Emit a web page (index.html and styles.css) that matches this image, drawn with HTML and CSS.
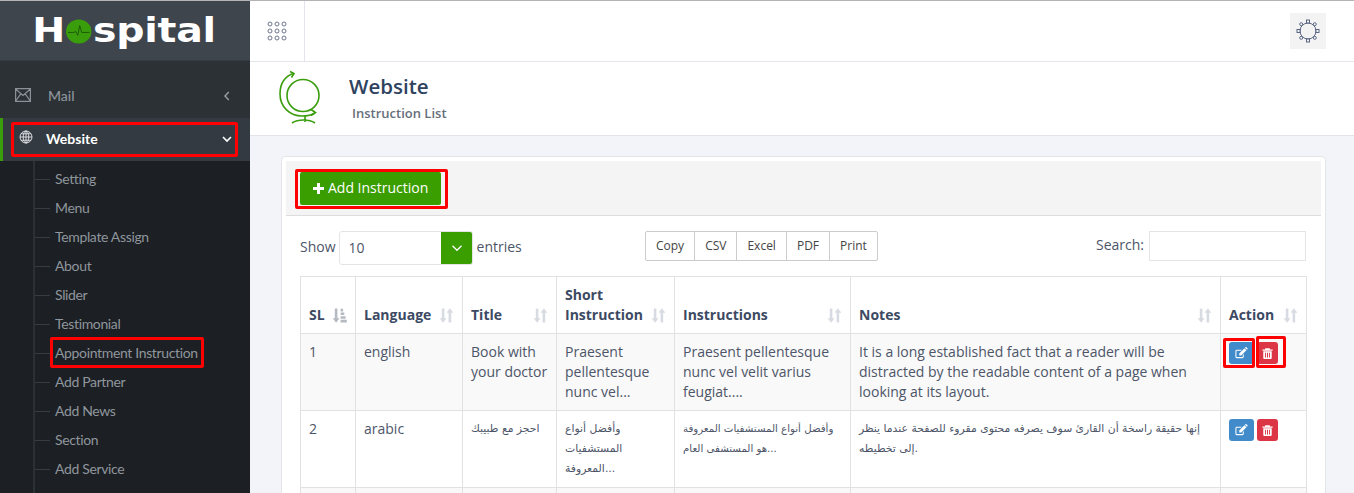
FILE: index.html
```html
<!DOCTYPE html>
<html lang="en">
<head>
  <meta charset="UTF-8">
  <meta name="viewport" content="width=device-width, initial-scale=1.0">
  <title>Instruction List</title>
  <link rel="stylesheet" href="styles.css">
</head>
<body>
  <svg class="defs" width="0" height="0">
    <symbol id="sort" viewBox="0 0 15 15">
      <path d="M2.800 .5h2.600v9.800h2.100L4.100 14.800 .7 10.300h2.100z" />
      <path d="M9.600 14.500h2.600V4.700h2.100L10.900 .2 7.500 4.700h2.100z" />
    </symbol>
    <symbol id="sort-on" viewBox="0 0 15 15">
      <path d="M2.800 .5h2.600v9.800h2.100L4.100 14.800 .7 10.300h2.100z" />
      <path d="M8.600 .8h2.500v2.600H8.600zM8.600 4.500h3.700v2.600H8.600zM8.600 8.200h5v2.500h-5zM8.600 11.800h6.200v2.600H8.600z" />
    </symbol>
    <symbol id="edit" viewBox="0 0 16 16">
      <path d="M11.200 9.200v3.100c0 .9-.7 1.600-1.600 1.600H3.200c-.9 0-1.600-.7-1.600-1.600V5.900c0-.9.7-1.600 1.600-1.600h5.700l-1.200 1.200H3.200c-.2 0-.4.2-.4.4v6.400c0 .2.2.4.4.4h6.400c.2 0 .4-.2.4-.4v-1.900z" />
      <path d="M6 8.500l5.900-5.900 2.300 2.300-5.900 5.900H6zM12.500 2l.6-.6c.3-.3.8-.3 1.100 0l1.200 1.200c.3.300.3.800 0 1.100l-.6.6z" />
    </symbol>
    <symbol id="trash" viewBox="0 0 16 16">
      <path d="M5.500 1.500h5l.8 1.500h3v1.500H1.700V3h3zM2.800 5.300h10.400v8c0 .9-.6 1.500-1.400 1.500H4.200c-.8 0-1.400-.6-1.400-1.500zM5 7v6h1.100V7zm2.400 0v6h1.200V7zM9.900 7v6H11V7z" />
    </symbol>
  </svg>

  <div class="layout">
    <aside class="sidebar">
      <div class="logo">
        <div class="logo-text">
          <span>H</span>
          <svg class="logo-dot" viewBox="0 0 26 26" preserveAspectRatio="none">
            <ellipse cx="13" cy="13" rx="13" ry="12.500" fill="#3a9d0c" />
            <path d="M2 14h6l2-1 2 4 2-10 2 7h8" fill="none" stroke="#1d5a08" stroke-width="1" />
          </svg>
          <span>spital</span>
        </div>
      </div>

      <nav class="menu">
        <a class="menu-item mail">
          <svg class="menu-icon mail-icon" viewBox="0 0 16 14">
            <path d="M.6.6h14.800v12.800H.6zM.6 1l7.400 6.500L15.400 1M.6 13l5.200-7.200M15.400 13l-5.200-7.200" fill="none" stroke="#8b9198" stroke-width="1.200" />
          </svg>
          <span>Mail</span>
          <svg class="chev" viewBox="0 0 10 10"><path d="M6.800 1L3 5l3.800 4" fill="none" stroke="#9aa0a6" stroke-width="1.400" /></svg>
        </a>
        <a class="menu-item website">
          <svg class="menu-icon globe-icon" viewBox="0 0 14 14">
            <g fill="none" stroke="#e6e8ee" stroke-width="0.900">
              <circle cx="7" cy="7" r="6" />
              <ellipse cx="7" cy="7" rx="2.800" ry="6" />
              <path d="M7 1v12M1 7h12M2 3.800h10M2 10.200h10" />
            </g>
          </svg>
          <span>Website</span>
          <svg class="chev" viewBox="0 0 10 10"><path d="M1 3l4 4 4-4" fill="none" stroke="#fff" stroke-width="1.600" /></svg>
          <i class="mark mark-website"></i>
        </a>
        <ul class="submenu">
          <li>Setting</li>
          <li>Menu</li>
          <li>Template Assign</li>
          <li>About</li>
          <li>Slider</li>
          <li>Testimonial</li>
          <li class="marked">Appointment Instruction<i class="mark mark-sub"></i></li>
          <li>Add Partner</li>
          <li>Add News</li>
          <li>Section</li>
          <li>Add Service</li>
        </ul>
      </nav>
    </aside>

    <div class="content">
      <header class="topbar">
        <div class="apps">
          <svg width="20" height="20" viewBox="0 0 20 20">
            <g fill="none" stroke="#6f7690" stroke-width="1">
              <circle cx="3" cy="3" r="2" /><circle cx="10" cy="3" r="2" /><circle cx="17" cy="3" r="2" />
              <circle cx="3" cy="10" r="2" /><circle cx="10" cy="10" r="2" /><circle cx="17" cy="10" r="2" />
              <circle cx="3" cy="17" r="2" /><circle cx="10" cy="17" r="2" /><circle cx="17" cy="17" r="2" />
            </g>
          </svg>
        </div>
        <button class="gear" type="button">
          <svg width="24" height="24" viewBox="0 0 24 24">
            <g fill="#f3f3f3" stroke="#4d5a78" stroke-width="0.900">
              <circle cx="12" cy="12" r="8" />
              <rect x="10.500" y="1" width="3" height="3" />
              <rect x="10.500" y="20" width="3" height="3" />
              <rect x="1" y="10.500" width="3" height="3" />
              <rect x="20" y="10.500" width="3" height="3" />
              <rect x="3.700" y="3.700" width="3" height="3" rx="1.500" />
              <rect x="17.300" y="3.700" width="3" height="3" rx="1.500" />
              <rect x="3.700" y="17.300" width="3" height="3" rx="1.500" />
              <rect x="17.300" y="17.300" width="3" height="3" rx="1.500" />
            </g>
          </svg>
        </button>
      </header>

      <section class="page-title">
        <svg class="title-icon" width="46" height="56" viewBox="0 0 46 56">
          <g fill="none" stroke="#3a9d0c" stroke-width="1.600">
            <circle cx="27" cy="25.500" r="16" />
            <path d="M17 3.500C8 7 4 15 4 24c0 13 10 22 22 22 6 0 10-1 13-3" />
            <path d="M14 1.500l4 2-2.500 4M35 39.500l4.500 3-4.500 3" />
            <path d="M29 46v6M16 53c6-4 17-4 23 0" />
          </g>
        </svg>
        <div class="title-text">
          <h1>Website</h1>
          <p>Instruction List</p>
        </div>
      </section>

      <main class="body">
        <div class="card">
          <div class="card-head">
            <a class="add-btn">
              <svg width="11" height="11" viewBox="0 0 11 11"><path d="M4 0h3v4h4v3H7v4H4V7H0V4h4z" fill="#fff" /></svg>
              Add Instruction
              <i class="mark mark-add"></i>
            </a>
          </div>
          <div class="card-body">
            <div class="tools">
              <div class="length">
                <span class="lbl">Show</span>
                <div class="select">
                  <span class="select-value">10</span>
                  <span class="select-arrow"><svg width="14" height="14" viewBox="0 0 14 14"><path d="M2.500 4.800L7 9.300l4.500-4.500" fill="none" stroke="#fff" stroke-width="1.300" /></svg></span>
                </div>
                <span class="lbl">entries</span>
              </div>
              <div class="exports">
                <a>Copy</a><a>CSV</a><a>Excel</a><a>PDF</a><a>Print</a>
              </div>
              <label class="search">Search: <input type="text"></label>
            </div>

            <table class="list">
              <colgroup>
                <col class="c-sl"><col class="c-lang"><col class="c-title"><col class="c-short"><col class="c-inst"><col class="c-notes"><col class="c-action">
              </colgroup>
              <thead>
                <tr>
                  <th><span class="th-in">SL <svg class="sort on"><use href="#sort-on" /></svg></span></th>
                  <th><span class="th-in">Language <svg class="sort"><use href="#sort" /></svg></span></th>
                  <th><span class="th-in">Title <svg class="sort"><use href="#sort" /></svg></span></th>
                  <th><span class="th-in">Short<br>Instruction <svg class="sort"><use href="#sort" /></svg></span></th>
                  <th><span class="th-in">Instructions <svg class="sort"><use href="#sort" /></svg></span></th>
                  <th><span class="th-in">Notes <svg class="sort"><use href="#sort" /></svg></span></th>
                  <th><span class="th-in">Action <svg class="sort"><use href="#sort" /></svg></span></th>
                </tr>
              </thead>
              <tbody>
                <tr class="odd">
                  <td>1</td>
                  <td>english</td>
                  <td>Book with your doctor</td>
                  <td>Praesent pellentesque nunc vel...</td>
                  <td>Praesent pellentesque nunc vel velit varius feugiat....</td>
                  <td>It is a long established fact that a reader will be distracted by the readable content of a page when looking at its layout.</td>
                  <td class="actions">
                    <a class="act act-edit"><svg><use href="#edit" /></svg><i class="mark mark-edit"></i></a>
                    <a class="act act-del"><svg><use href="#trash" /></svg><i class="mark mark-del"></i></a>
                  </td>
                </tr>
                <tr>
                  <td>2</td>
                  <td>arabic</td>
                  <td class="ar">احجز مع طبيبك</td>
                  <td class="ar">وأفضل أنواع المستشفيات المعروفة...</td>
                  <td class="ar ar-fit">وأفضل أنواع المستشفيات المعروفة<br>هو المستشفى العام...</td>
                  <td class="ar">إنها حقيقة راسخة أن القارئ سوف يصرفه محتوى مقروء للصفحة عندما ينظر إلى تخطيطه.</td>
                  <td class="actions">
                    <a class="act act-edit"><svg><use href="#edit" /></svg></a>
                    <a class="act act-del"><svg><use href="#trash" /></svg></a>
                  </td>
                </tr>
                <tr class="odd">
                  <td>&nbsp;</td><td></td><td></td><td></td><td></td><td></td><td></td>
                </tr>
              </tbody>
            </table>
          </div>
        </div>
      </main>
    </div>
  </div>
</body>
</html>
```

FILE: styles.css
```css
* {
  box-sizing: border-box;
}
html, body {
  height: 100%;
  margin: 0;
  overflow: hidden;
}
body {
  font-family: "Open Sans", "DejaVu Sans", sans-serif;
  font-size: 14px;
  line-height: 20px;
  color: #4d5568;
  background-color: #f3f4f9;
}
.defs {
  position: absolute;
}
.layout {
  display: flex;
  height: 100%;
  border-top: 1px solid #b3b3b3;
}

/* red marks drawn over the screenshot */
.mark {
  position: absolute;
  border: 3px solid #f00;
  border-radius: 2px;
  pointer-events: none;
}
.mark-website { left: 8px; top: 4px; width: 227px; height: 35px; }
.mark-sub { left: -5px; top: -1px; width: 154px; height: 31px; }
.mark-add { left: -5px; top: -3px; width: 153px; height: 40px; }
.mark-edit { left: -6px; top: -4px; width: 32px; height: 30px; }
.mark-del { left: -1px; top: -6px; width: 30px; height: 32px; }

/* sidebar */
.sidebar {
  width: 250px;
  flex: none;
  background-color: #1c1f23;
}
.logo {
  height: 60px;
  display: flex;
  align-items: center;
  justify-content: center;
  padding: 0 2px 2px 0;
  background-color: #3f454d;
  border-bottom: 1px solid #363b42;
}
.logo-text {
  display: flex;
  align-items: center;
  transform: scaleX(1.16);
  color: #fff;
  font-family: "DejaVu Sans", sans-serif;
  font-size: 34px;
  font-weight: 700;
  letter-spacing: -0.2px;
}
.logo-dot {
  width: 22px;
  height: 25px;
  margin: 3px 1px 0 1px;
}
.menu-item {
  position: relative;
  display: flex;
  align-items: center;
  font-family: "Lato", sans-serif;
  font-size: 14px;
}
.mail {
  height: 57px;
  padding: 13px 18px 0 15px;
  background-color: #2c3136;
  color: #8f959b;
}
.mail span {
  margin-left: 17px;
  font-weight: 500;
}
.mail-icon {
  width: 16px;
  height: 14px;
  margin-top: -3px;
}
.website {
  height: 43px;
  padding: 0 18px 2px 16px;
  background-color: #343a41;
  border-left: 3px solid #3a9d0c;
  color: #fff;
  font-weight: 700;
}
.website span {
  margin-left: 13px;
}
.globe-icon {
  width: 14px;
  height: 14px;
  margin-top: -3px;
}
.chev {
  width: 10px;
  height: 10px;
  margin-left: auto;
}
.submenu {
  list-style: none;
  margin: 0;
  padding: 3px 0 0 55px;
  position: relative;
  height: 340px;
  font-family: "Lato", sans-serif;
  font-size: 14px;
  letter-spacing: -0.35px;
  color: #8f969d;
}
.submenu::before {
  content: "";
  position: absolute;
  left: 33px;
  top: 0;
  bottom: 0;
  width: 2px;
  background-color: #2c3136;
}
.submenu li {
  position: relative;
  height: 29px;
  line-height: 29px;
}
.submenu li::before {
  content: "";
  position: absolute;
  left: -20px;
  top: 15px;
  width: 15px;
  height: 1px;
  background-color: #363c42;
}

/* top */
.content {
  flex: 1;
  min-width: 0;
}
.topbar {
  height: 61px;
  display: flex;
  align-items: center;
  justify-content: space-between;
  padding-right: 28px;
  background-color: #fff;
  border-bottom: 1px solid #e4e5ec;
}
.apps {
  width: 55px;
  height: 60px;
  display: flex;
  align-items: center;
  justify-content: center;
  border-right: 1px solid #e4e5ec;
}
.gear {
  width: 36px;
  height: 36px;
  display: flex;
  align-items: center;
  justify-content: center;
  padding: 0;
  border: 0;
  background-color: #f3f3f3;
}
.page-title {
  height: 74px;
  display: flex;
  padding: 8px 0 0 26px;
  background-color: #fff;
  border-bottom: 1px solid #e1e4e8;
}
.title-text {
  margin-left: 27px;
}
.title-text h1 {
  margin: 1px 0 0;
  font-size: 20.500px;
  line-height: 30px;
  font-weight: 600;
  color: #2f4260;
}
.title-text p {
  margin: 2px 0 0 3px;
  font-size: 13px;
  font-weight: 600;
  color: #666e7a;
}

/* card */
.body {
  padding: 20px 28px 0 31px;
}
.card {
  padding: 4px 4px 0;
  background-color: #fff;
  border: 1px solid #e4e5e7;
  border-radius: 4px;
}
.card-head {
  height: 55px;
  padding: 11px 0 0 14px;
  background-color: #f4f4f4;
  border-bottom: 1px solid #ddd;
}
.add-btn {
  position: relative;
  display: inline-flex;
  align-items: center;
  gap: 4px;
  width: 141px;
  height: 33px;
  padding: 0 0 1px 13px;
  background-color: #3a9d00;
  border-radius: 2px;
  color: #fff;
  font-size: 14px;
}
.card-body {
  padding: 15px 15px 0 14px;
}
.tools {
  display: flex;
  align-items: flex-start;
  height: 45px;
}
.length {
  display: flex;
  align-items: center;
  gap: 3px;
  width: 345px;
  height: 34px;
}
.lbl {
  margin-bottom: 2px;
}
.select {
  display: flex;
  width: 134px;
  height: 34px;
  margin-right: 1px;
  border: 1px solid #e4e5e7;
  border-radius: 3px;
  overflow: hidden;
}
.select-value {
  flex: 1;
  padding: 6px 0 0 9px;
}
.select-arrow {
  width: 32px;
  margin: -1px;
  display: flex;
  align-items: center;
  justify-content: center;
  background-color: #3a9d00;
}
.exports {
  display: flex;
  height: 30px;
  border: 1px solid #ccc;
  border-radius: 2px;
  font-size: 12px;
  line-height: 28px;
  color: #444;
}
.exports a {
  padding: 0 10px;
  border-left: 1px solid #ccc;
}
.exports a:first-child {
  border-left: 0;
}
.search {
  margin-left: auto;
  display: flex;
  gap: 5px;
  line-height: 28px;
}
.search input {
  width: 157px;
  height: 30px;
  border: 1px solid #e4e5e7;
}

/* table */
.list {
  width: 1006px;
  table-layout: fixed;
  border-collapse: collapse;
}
.c-sl { width: 55px; }
.c-lang { width: 107px; }
.c-title { width: 94px; }
.c-short { width: 118px; }
.c-inst { width: 176px; }
.c-notes { width: 370px; }
.c-action { width: 86px; }
.list th, .list td {
  border: 1px solid #e1e1e1;
  padding: 8px;
  vertical-align: top;
  text-align: left;
}
.list th {
  vertical-align: bottom;
  color: #3d4a63;
  font-weight: 700;
  height: 57px;
}
.list td {
  height: 77px;
}
.th-in {
  display: block;
  position: relative;
  padding-right: 18px;
}
.sort {
  position: absolute;
  right: 0;
  bottom: 2px;
  width: 15px;
  height: 15px;
  fill: #d8dbe2;
}
.sort.on {
  fill: #b5b9c2;
}
.odd td {
  background-color: #f9f9f9;
}
.list .ar {
  font-family: "DejaVu Sans", sans-serif;
  font-size: 10.800px;
  line-height: 20px;
}
.list .ar-fit {
  font-size: 10.200px;
  white-space: nowrap;
}
.actions {
  white-space: nowrap;
}
.act {
  position: relative;
  display: inline-block;
  width: 25px;
  height: 22px;
  border-radius: 3px;
  color: #fff;
  fill: #fff;
  vertical-align: top;
}
.act svg {
  position: absolute;
  left: 5px;
  top: 4px;
  width: 14px;
  height: 14px;
}
.act-edit {
  margin-right: -1px;
  background-color: #428bca;
}
.act-del {
  width: 21px;
  background-color: #dc3545;
}
.act-del svg {
  left: 4px;
  top: 5px;
  width: 13px;
  height: 13px;
}
```
